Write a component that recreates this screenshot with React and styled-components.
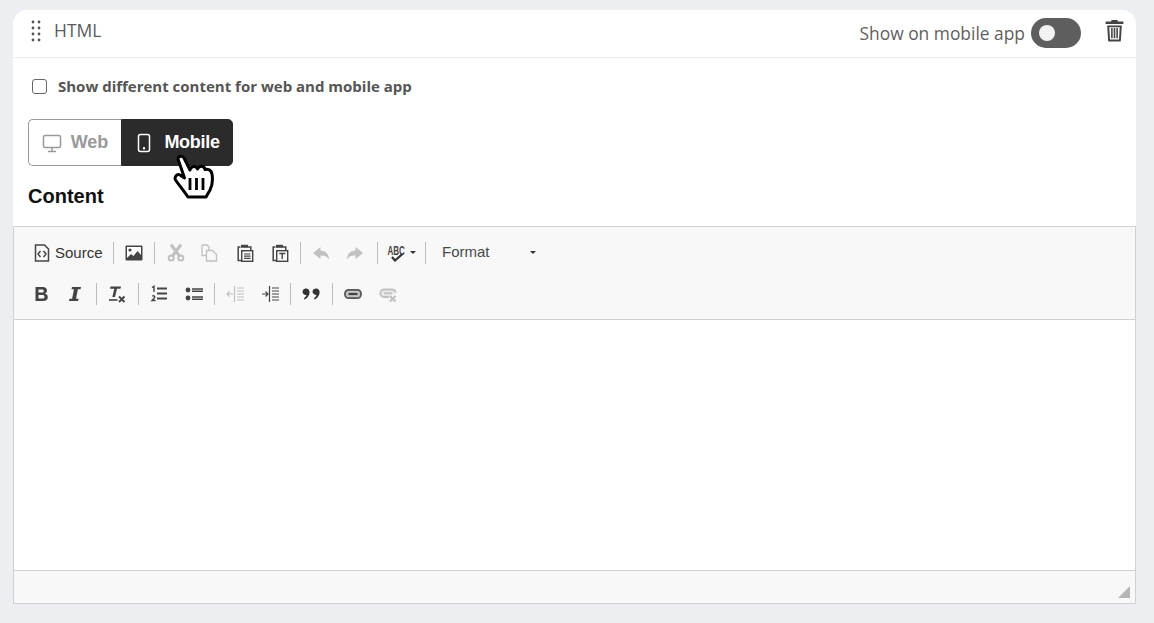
import styled, { createGlobalStyle } from 'styled-components';

const GlobalStyle = createGlobalStyle`
  html, body {
    margin: 0;
    padding: 0;
    background: #edeef1;
    overflow: hidden;
  }
`;

const Icon = ({ children, faded }) => (
  <IconSvg viewBox="0 0 18 18" width="18" height="18" $faded={faded}>
    {children}
  </IconSvg>
);

const Clipboard = ({ children }) => (
  <>
    <path d="M4.500 3H2.200v13.500h2.800" fill="none" stroke="#444" strokeWidth="1.500" />
    <path d="M5 0.800h7v3H5z" fill="#444" />
    <path d="M12 3h2.800v3" fill="none" stroke="#444" strokeWidth="1.500" />
    <rect x="5.700" y="6.700" width="11" height="10.600" fill="none" stroke="#444" strokeWidth="1.400" />
    {children}
  </>
);

// width = distance from this icon's left edge to the next icon or separator
const row1 = [
  {
    pad: 11,
    buttons: [
      {
        key: 'image',
        width: 29,
        icon: (
          <>
            <rect x="0.500" y="1.500" width="17" height="15" fill="#444" rx="1" />
            <rect x="2" y="3" width="14" height="11" fill="#fff" />
            <circle cx="5" cy="6" r="1.600" fill="#444" />
            <path d="M2 14l4-4 2.500 2 4-5 3.500 4v3z" fill="#444" />
          </>
        ),
      },
    ],
  },
  {
    pad: 12,
    buttons: [
      {
        key: 'cut',
        width: 33,
        faded: true,
        icon: (
          <>
            <path d="M4 0.500L12.500 12M14 0.500L5.500 12" stroke="#444" strokeWidth="3" />
            <circle cx="4.200" cy="14" r="2.500" fill="none" stroke="#444" strokeWidth="2" />
            <circle cx="13.800" cy="14" r="2.500" fill="none" stroke="#444" strokeWidth="2" />
          </>
        ),
      },
      {
        key: 'copy',
        width: 36,
        faded: true,
        icon: (
          <path
            d="M2 1h5l2 2v3.500M2 1v10.500h4M6.500 6.500h6l4 4V17h-10z"
            fill="none"
            stroke="#444"
            strokeWidth="1.300"
          />
        ),
      },
      {
        key: 'paste',
        width: 35,
        icon: (
          <Clipboard>
            <path d="M8 10h6.500M8 12.200h6.500M8 14.400h6.500" stroke="#444" strokeWidth="1.200" />
          </Clipboard>
        ),
      },
      {
        key: 'pasteText',
        width: 29,
        icon: (
          <Clipboard>
            <path d="M8.300 9.500h6M11.200 9.500v5.500" stroke="#444" strokeWidth="1.400" />
          </Clipboard>
        ),
      },
    ],
  },
  {
    pad: 11,
    buttons: [
      {
        key: 'undo',
        width: 34,
        faded: true,
        icon: <path d="M8.500 3L1 9l7.500 6v-3.600c4 0 6.500.8 8.500 4.100 0-5.400-3.200-8.800-8.500-9z" fill="#444" />,
      },
      {
        key: 'redo',
        width: 31,
        faded: true,
        icon: <path d="M9.500 3L17 9l-7.500 6v-3.600c-4 0-6.500.8-8.500 4.100 0-5.400 3.200-8.800 8.500-9z" fill="#444" />,
      },
    ],
  },
];

const row2 = [
  {
    pad: 8,
    buttons: [
      {
        key: 'bold',
        width: 34,
        icon: (
          <path
            d="M2.500 2h7.200c2.800 0 4.300 1.300 4.300 3.500 0 1.500-.8 2.600-2.200 3 1.900.4 3 1.600 3 3.500 0 2.500-1.800 4-4.700 4H2.500zm3 2.400v3.200h3.400c1.200 0 1.900-.6 1.900-1.600s-.7-1.600-1.900-1.600zm0 5.500v3.700h3.900c1.400 0 2.100-.7 2.100-1.900s-.8-1.800-2.100-1.800z"
            fill="#444"
            fillRule="evenodd"
          />
        ),
      },
      {
        key: 'italic',
        width: 29,
        icon: <path d="M5 2h9l-.5 2.200h-2.600L9 13.800h2.600L11 16H2l.5-2.200h2.600L7 4.200H4.500z" fill="#444" />,
      },
    ],
  },
  {
    pad: 11,
    buttons: [
      {
        key: 'clear',
        width: 30,
        icon: (
          <>
            <path d="M2.500 1.500H13l-.5 2.300H9l-2 8.200H4.300l2-8.200H2z" fill="#444" />
            <path d="M1 14.200h8.500v1.600H1z" fill="#444" />
            <path d="M11 11.500l5.500 5.500M16.500 11.500L11 17" stroke="#444" strokeWidth="1.900" />
          </>
        ),
      },
    ],
  },
  {
    pad: 11,
    buttons: [
      {
        key: 'ol',
        width: 35,
        icon: (
          <>
            <path d="M7 3.500h10M7 8.500h10M7 13.500h10" stroke="#444" strokeWidth="1.900" />
            <path
              d="M2 2.500l2-1.200V7M2.300 11.300c1.700-1.200 3.400.3 1.800 1.900L2 15.500h3.600"
              fill="none"
              stroke="#444"
              strokeWidth="1.400"
            />
          </>
        ),
      },
      {
        key: 'ul',
        width: 29,
        icon: (
          <>
            <circle cx="3" cy="5" r="2.400" fill="#444" />
            <circle cx="3" cy="13" r="2.400" fill="#444" />
            <path d="M7 4h11M7 6.200h11M7 12h11M7 14.200h11" stroke="#444" strokeWidth="1.400" />
          </>
        ),
      },
    ],
  },
  {
    pad: 11,
    buttons: [
      {
        key: 'outdent',
        width: 35,
        faded: true,
        icon: (
          <>
            <path d="M8.500 1v16M11 3h7M11 6h7M11 9h7M11 12h7M11 15h7" stroke="#444" strokeWidth="1.200" />
            <path d="M7 9H1M3.500 6.500L1 9l2.500 2.500" fill="none" stroke="#444" strokeWidth="1.200" />
          </>
        ),
      },
      {
        key: 'indent',
        width: 29,
        icon: (
          <>
            <path d="M8.500 1v16M11 3h7M11 6h7M11 9h7M11 12h7M11 15h7" stroke="#444" strokeWidth="1.200" />
            <path d="M1 9h6M4.500 6.500L7 9l-2.500 2.500" fill="none" stroke="#444" strokeWidth="1.200" />
          </>
        ),
      },
    ],
  },
  {
    pad: 11,
    buttons: [
      {
        key: 'quote',
        width: 30,
        icon: (
          <path
            d="M4 3.500c2.200 0 3.600 1.500 3.600 3.600 0 3.400-2.200 6.400-5 7.400l-.7-1.300c1.300-.7 2.300-1.900 2.600-3.200C2.500 10 .5 8.900.5 6.900.5 5 2 3.500 4 3.500zm10 0c2.200 0 3.600 1.500 3.600 3.600 0 3.400-2.200 6.400-5 7.400l-.7-1.300c1.300-.7 2.300-1.900 2.600-3.200-2-.1-4-1.200-4-3.200C10.500 5 12 3.500 14 3.500z"
            fill="#333"
          />
        ),
      },
    ],
  },
  {
    pad: 11,
    buttons: [
      {
        key: 'link',
        width: 35,
        icon: (
          <>
            <rect x="1" y="4.800" width="16" height="8.400" rx="3.800" fill="#c4c4c4" stroke="#555" strokeWidth="1.800" />
            <path d="M4.500 9h9" stroke="#444" strokeWidth="2.200" />
          </>
        ),
      },
      {
        key: 'unlink',
        width: 18,
        faded: true,
        icon: (
          <>
            <path d="M10 12H5a3.500 3.500 0 010-7.500h8c2 0 3.500 1.300 3.700 3" fill="#c4c4c4" stroke="#444" strokeWidth="1.800" />
            <path d="M5 8.300h8" stroke="#444" strokeWidth="1.800" />
            <path d="M11 11l5.500 5.500M16.500 11L11 16.500" stroke="#444" strokeWidth="2.200" />
          </>
        ),
      },
    ],
  },
];

function ToolGroups({ groups, leading }) {
  return groups.map((group, i) => (
    <ToolGroup key={group.buttons[0].key}>
      {(leading || i > 0) && <Separator />}
      <GroupButtons $pad={group.pad}>
        {group.buttons.map((b) => (
          <ToolButton key={b.key} $width={b.width}>
            <Icon faded={b.faded}>{b.icon}</Icon>
          </ToolButton>
        ))}
      </GroupButtons>
    </ToolGroup>
  ));
}

export default function App() {
  return (
    <Page>
      <GlobalStyle />
      <Card>
        <CardHeader>
          <HeaderLeft>
            <DragHandle viewBox="0 0 10 22" width="10" height="22">
              {[2, 8].map((x) =>
                [2, 8, 14, 20].map((y) => <circle key={`${x}-${y}`} cx={x} cy={y} r="1.400" fill="#555" />),
              )}
            </DragHandle>
            <BlockTitle>HTML</BlockTitle>
          </HeaderLeft>
          <HeaderRight>
            <SwitchLabel>Show on mobile app</SwitchLabel>
            <Switch>
              <SwitchKnob />
            </Switch>
            <TrashIcon viewBox="0 0 18 22" width="19" height="23">
              <path d="M6 2.500V1h6v1.500h5.500v2.300H.5V2.500z" fill="#444" />
              <path
                d="M2 6.200h14l-.9 14.300c0 .6-.5 1-1.100 1H4c-.6 0-1.100-.4-1.100-1zm2 1.800l.7 11.500h8.600L14 8z"
                fill="#444"
                fillRule="evenodd"
              />
              <path d="M6.500 8.500v10M9 8.500v10M11.500 8.500v10" stroke="#444" strokeWidth="1.500" />
            </TrashIcon>
          </HeaderRight>
        </CardHeader>

        <CardBody>
          <CheckRow>
            <Checkbox />
            <CheckText>Show different content for web and mobile app</CheckText>
          </CheckRow>

          <Segmented>
            <SegmentButton>
              <svg viewBox="0 0 20 20" width="20" height="20" fill="none" stroke="#999" strokeWidth="1.500">
                <rect x="1.500" y="2.500" width="17" height="12" rx="1.500" />
                <path d="M10 14.500v4M6 18.500h8" />
              </svg>
              Web
            </SegmentButton>
            <SegmentButton $active>
              <svg viewBox="0 0 20 20" width="20" height="20" fill="none" stroke="#fff" strokeWidth="1.500">
                <rect x="4.500" y="1.500" width="11" height="17" rx="2" />
                <circle cx="10" cy="15.200" r="0.500" fill="#fff" />
              </svg>
              Mobile
            </SegmentButton>
            <HandCursor viewBox="0 0 42 48" width="42" height="48">
              <path
                d="M5 6C5 3 9 2 11 5L17 17C18 13 23 12 24.500 16C26 12.500 31 12 32 16.500C33.500 16 38 16 39 21C40 27 39.500 32 37 37L33 44H15C11 38 6 32 2.500 27C1 24 4 20.500 7 22L11.500 25Z"
                fill="#fff"
                stroke="#000"
                strokeWidth="3"
                strokeLinejoin="round"
              />
              <path d="M17 25v12M23.500 25v12M30 25v12" stroke="#000" strokeWidth="2.800" />
            </HandCursor>
          </Segmented>

          <ContentLabel>Content</ContentLabel>
        </CardBody>

        <Editor>
          <Toolbar>
            <ToolRow>
              <SourceButton>
                <Icon>
                  <path d="M2.500 1h9l4 4v12h-13z" fill="none" stroke="#444" strokeWidth="1.500" />
                  <path d="M7.500 7L5 10l2.500 3M10.500 7L13 10l-2.500 3" fill="none" stroke="#444" strokeWidth="1.500" />
                </Icon>
                Source
              </SourceButton>
              <ToolGroups groups={row1} leading />
              <ToolGroup>
                <Separator />
                <SpellButton>
                  <Icon>
                    <text
                      x="0.500"
                      y="6.900"
                      transform="scale(1 1.600)"
                      fontFamily="Liberation Sans, sans-serif"
                      fontSize="8"
                      fontWeight="700"
                      fill="#444"
                    >
                      ABC
                    </text>
                    <path d="M5 13l3 3.500 7.500-6.500" fill="none" stroke="#333" strokeWidth="2.200" />
                  </Icon>
                  <Caret />
                </SpellButton>
                <Separator />
                <FormatCombo>
                  <FormatText>Format</FormatText>
                  <Caret />
                </FormatCombo>
              </ToolGroup>
            </ToolRow>
            <ToolRow>
              <ToolGroups groups={row2} />
            </ToolRow>
          </Toolbar>
          <EditArea />
          <EditorFooter>
            <ResizeGrip />
          </EditorFooter>
        </Editor>
      </Card>
    </Page>
  );
}

const Page = styled.div`
  height: 623px;
  padding: 10px 18px 0 13px;
  box-sizing: border-box;
  font-family: 'Open Sans', sans-serif;
`;

const Card = styled.div`
  background: #fff;
  border-radius: 14px 14px 0 0;
`;

const CardHeader = styled.div`
  height: 47px;
  border-bottom: 1px solid #eeeeee;
  display: flex;
  align-items: flex-start;
  justify-content: space-between;
  padding: 0 12px 0 18px;
`;

const HeaderLeft = styled.div`
  display: flex;
  align-items: center;
  height: 41px;
  gap: 13px;
`;

const DragHandle = styled.svg`
  display: block;
`;

const BlockTitle = styled.span`
  font-size: 17.500px;
  color: #5a5a5a;
  margin-top: -1px;
`;

const HeaderRight = styled.div`
  display: flex;
  align-items: center;
  height: 46px;
`;

const SwitchLabel = styled.span`
  font-size: 17.400px;
  color: #5f5f5f;
  margin-right: 6px;
`;

const Switch = styled.div`
  width: 50px;
  height: 30px;
  border-radius: 15px;
  background: #5e5e5e;
  display: flex;
  align-items: center;
  padding-left: 8px;
  box-sizing: border-box;
  margin-right: 24px;
`;

const SwitchKnob = styled.div`
  width: 16px;
  height: 16px;
  border-radius: 50%;
  background: #f2f2f2;
`;

const TrashIcon = styled.svg`
  display: block;
  margin-top: -5px;
`;

const CardBody = styled.div`
  padding: 0 15px;
  height: 168px;
  box-sizing: border-box;
`;

const CheckRow = styled.label`
  display: flex;
  align-items: center;
  height: 56px;
  padding-left: 4px;
`;

const Checkbox = styled.span`
  width: 13px;
  height: 13px;
  border: 1px solid #666;
  border-radius: 3px;
  background: #fff;
  margin-right: 11px;
`;

const CheckText = styled.span`
  font-size: 15px;
  font-weight: 700;
  color: #555;
`;

const Segmented = styled.div`
  position: relative;
  display: flex;
  width: 205px;
  height: 47px;
  margin-top: 5px;
`;

const SegmentButton = styled.div`
  flex: ${(p) => (p.$active ? '0 0 112px' : '0 0 93px')};
  box-sizing: border-box;
  display: flex;
  align-items: center;
  justify-content: center;
  gap: ${(p) => (p.$active ? '10px' : '9px')};
  font-family: 'Liberation Sans', Arial, sans-serif;
  font-weight: 700;
  font-size: 18px;
  letter-spacing: ${(p) => (p.$active ? '-0.3px' : '0')};
  color: ${(p) => (p.$active ? '#fff' : '#999')};
  background: ${(p) => (p.$active ? '#2b2b2b' : '#fff')};
  border: 1px solid ${(p) => (p.$active ? '#2b2b2b' : '#999')};
  border-right: ${(p) => (p.$active ? '1px solid #2b2b2b' : 'none')};
  border-radius: ${(p) => (p.$active ? '0 5px 5px 0' : '5px 0 0 5px')};
`;

const HandCursor = styled.svg`
  position: absolute;
  left: 145px;
  top: 34px;
`;

const ContentLabel = styled.div`
  font-family: 'Liberation Sans', Arial, sans-serif;
  font-weight: 700;
  font-size: 20px;
  color: #111;
  margin-top: 19px;
`;

const Editor = styled.div`
  border: 1px solid #d1d1d1;
  height: 378px;
  box-sizing: border-box;
  display: flex;
  flex-direction: column;
  font-family: 'Liberation Sans', Arial, sans-serif;
`;

const Toolbar = styled.div`
  height: 93px;
  box-sizing: border-box;
  background: #f8f8f8;
  border-bottom: 1px solid #d1d1d1;
  padding: 5px 0 0 11px;
`;

const ToolRow = styled.div`
  display: flex;
  align-items: center;
  height: 41px;
`;

const ToolGroup = styled.div`
  display: flex;
  align-items: center;
`;

const GroupButtons = styled.div`
  display: flex;
  padding-left: ${(p) => p.$pad}px;
`;

const ToolButton = styled.div`
  width: ${(p) => p.$width}px;
`;

const IconSvg = styled.svg`
  display: block;
  opacity: ${(p) => (p.$faded ? 0.3 : 1)};
`;

const SourceButton = styled.div`
  display: flex;
  align-items: center;
  gap: 4px;
  font-size: 15px;
  color: #333;
  padding-left: 8px;
  width: 88px;
  box-sizing: border-box;
`;

const Separator = styled.span`
  width: 1px;
  height: 22px;
  background: #bcbcbc;
  display: block;
`;

const SpellButton = styled.div`
  display: flex;
  align-items: center;
  gap: 5px;
  width: 47px;
  padding-left: 9px;
  box-sizing: border-box;
`;

const Caret = styled.span`
  width: 0;
  height: 0;
  border-left: 3.500px solid transparent;
  border-right: 3.500px solid transparent;
  border-top: 3.500px solid #333;
`;

const FormatCombo = styled.div`
  display: flex;
  align-items: center;
  justify-content: space-between;
  width: 110px;
  padding-left: 16px;
  box-sizing: border-box;
  font-size: 15px;
  color: #484848;
`;

const FormatText = styled.span`
  margin-top: -3px;
`;

const EditArea = styled.div`
  flex: 1;
  background: #fff;
`;

const EditorFooter = styled.div`
  position: relative;
  height: 32px;
  background: #f8f8f8;
  border-top: 1px solid #d1d1d1;
`;

const ResizeGrip = styled.span`
  position: absolute;
  right: 5px;
  bottom: 5px;
  width: 0;
  height: 0;
  border-left: 12px solid transparent;
  border-bottom: 12px solid #b5b5b5;
`;
